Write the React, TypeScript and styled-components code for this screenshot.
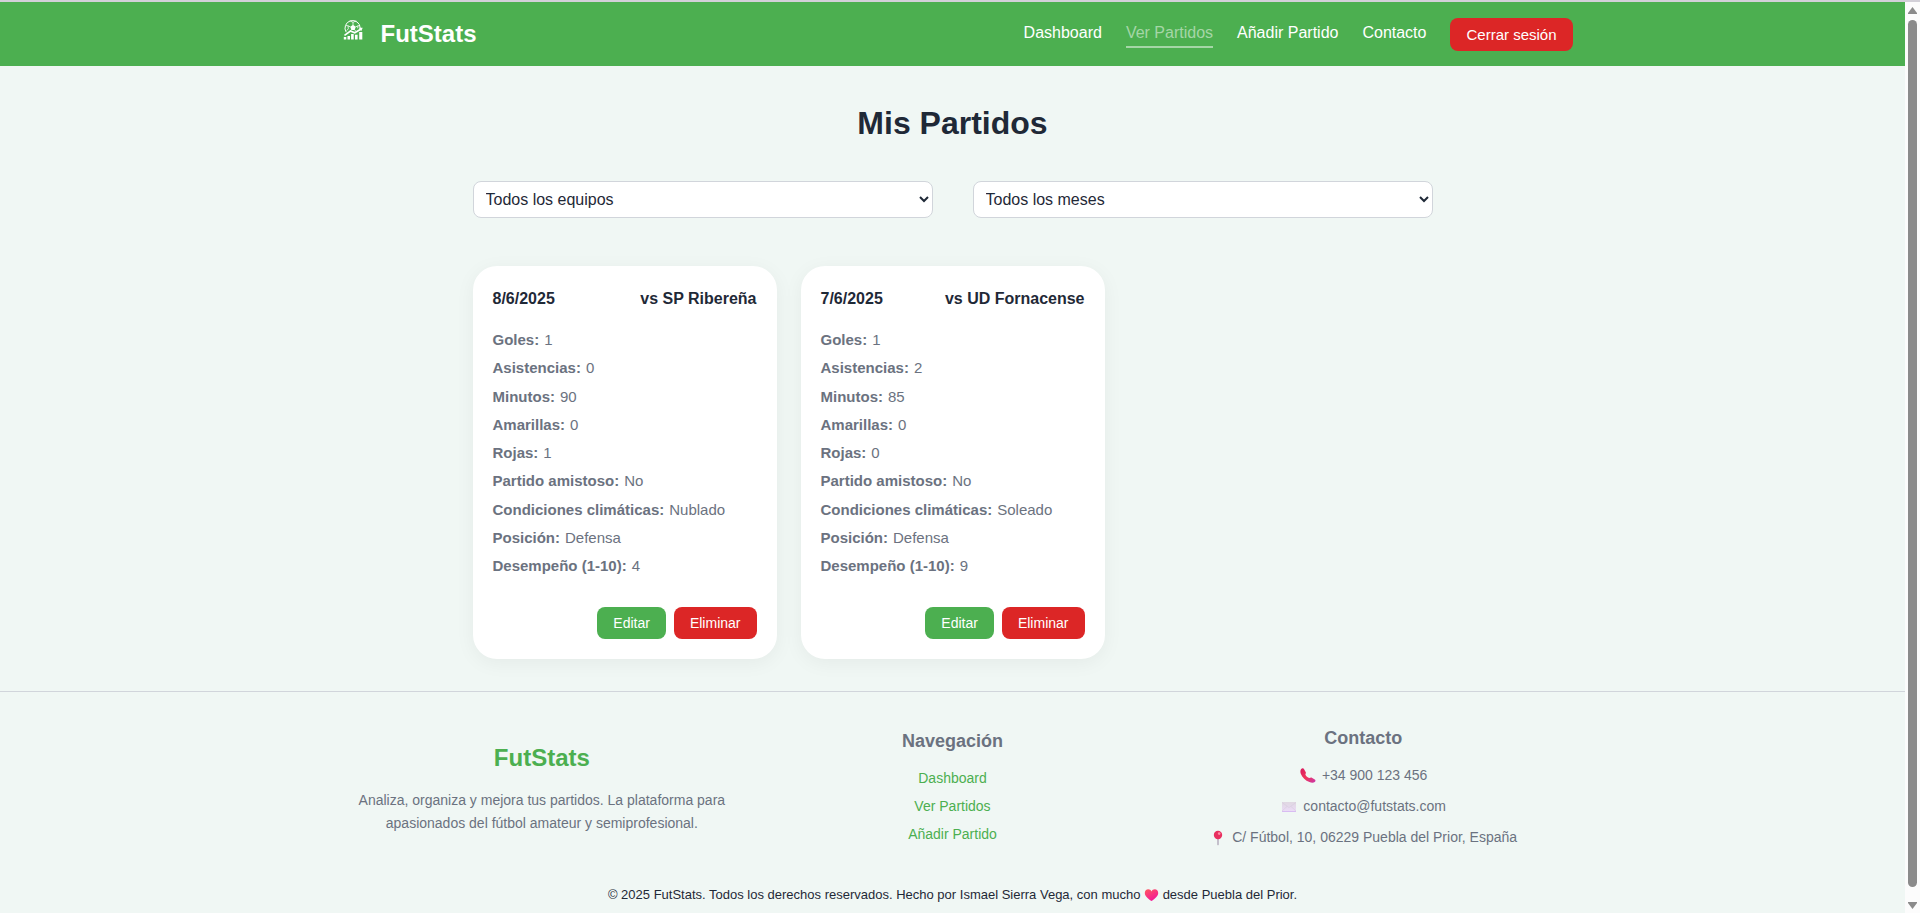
import React from "react";
import styled, { createGlobalStyle } from "styled-components";

const color = {
  green: "#4caf50",
  red: "#dc2626",
  page: "#f0f7f4",
  ink: "#1f2937",
  muted: "#6b7280",
  line: "#d1d5db",
};

const GlobalStyle = createGlobalStyle`
  *, *::before, *::after { box-sizing: border-box; }
  body {
    margin: 0;
    background: ${color.page};
    color: ${color.ink};
    font-family: Arial, "Liberation Sans", sans-serif;
    font-size: 16px;
  }
  h1, h2, h3, p, ul, dl, dd { margin: 0; padding: 0; }
  ul { list-style: none; }
  a { text-decoration: none; }
`;

const Shell = styled.div`
  display: grid;
  grid-template-columns: minmax(0, 1fr) 15px;
  min-height: 100vh;
  border-top: 2px solid #d3d0d8;
`;

const Page = styled.div`
  display: flex;
  flex-direction: column;
`;

const Header = styled.header`
  background: ${color.green};
`;

const HeaderInner = styled.div`
  display: flex;
  align-items: center;
  justify-content: space-between;
  max-width: 1280px;
  min-height: 64px;
  margin: 0 auto;
  padding: 0 20px;
`;

const Brand = styled.a`
  display: flex;
  align-items: center;
  gap: 8px;
  color: #fff;
  font-size: 24px;
  font-weight: 700;
`;

const BrandMark = styled.svg`
  width: 40px;
  height: 40px;
`;

const Nav = styled.nav`
  display: flex;
  align-items: center;
  gap: 24px;
`;

const NavLink = styled.a<{ $active?: boolean }>`
  border-bottom: 2px solid ${(p) => (p.$active ? "#a5d6a7" : "transparent")};
  color: ${(p) => (p.$active ? "#a5d6a7" : "#fff")};
  line-height: 26px;
`;

const Button = styled.button<{ $danger?: boolean; $large?: boolean }>`
  padding: 8px 16px;
  border: 0;
  border-radius: 8px;
  background: ${(p) => (p.$danger ? color.red : color.green)};
  color: #fff;
  font-family: inherit;
  font-size: ${(p) => (p.$large ? 15 : 14)}px;
  cursor: pointer;
`;

const Main = styled.main`
  width: 100%;
  max-width: 1000px;
  margin: 0 auto;
  padding: 32px 20px;
`;

const Title = styled.h1`
  margin-bottom: 32px;
  font-size: 32px;
  line-height: 51px;
  text-align: center;
`;

const Filters = styled.div`
  display: grid;
  grid-template-columns: 1fr 1fr;
  gap: 40px;
  margin-bottom: 48px;
`;

const Select = styled.select`
  width: 100%;
  height: 37px;
  padding: 8px;
  border: 1px solid ${color.line};
  border-radius: 8px;
  background: #fff;
  color: ${color.ink};
  font-family: inherit;
  font-size: 16px;
`;

const CardGrid = styled.section`
  display: grid;
  grid-template-columns: repeat(3, 1fr);
  gap: 24px;
`;

const Card = styled.article`
  display: flex;
  flex-direction: column;
  min-height: 393px;
  padding: 20px;
  border-radius: 24px;
  background: #fff;
  box-shadow: 0 4px 20px rgba(0, 0, 0, 0.05);
`;

const CardHeader = styled.div`
  display: flex;
  justify-content: space-between;
  margin-bottom: 16px;
  font-weight: 700;
  line-height: 26px;
`;

const Stats = styled.dl`
  display: flex;
  flex: 1;
  flex-direction: column;
  justify-content: space-between;
  color: ${color.muted};
  font-size: 15px;
  line-height: 24px;
`;

const Stat = styled.div`
  display: flex;
  gap: 5px;
  dt { font-weight: 700; }
`;

const CardActions = styled.div`
  display: flex;
  justify-content: flex-end;
  gap: 8px;
  margin-top: 29px;
`;

const Footer = styled.footer`
  flex: 1;
  border-top: 1px solid ${color.line};
  padding: 32px 20px 0;
`;

const FooterColumns = styled.div`
  display: grid;
  grid-template-columns: repeat(3, 1fr);
  align-items: center;
  gap: 32px;
  max-width: 1200px;
  margin: 0 auto;
  color: ${color.muted};
  font-size: 14px;
  text-align: center;
`;

const FooterBrand = styled.h2`
  margin-bottom: 12px;
  color: ${color.green};
  font-size: 24px;
  line-height: 38px;
`;

const FooterText = styled.p`
  line-height: 23px;
`;

const FooterHeading = styled.h3`
  margin-bottom: 12px;
  font-size: 18px;
  line-height: 28px;
`;

const FooterLinks = styled.ul`
  display: grid;
  gap: 5px;
  line-height: 23px;
  a { color: ${color.green}; }
`;

const ContactList = styled.ul`
  display: grid;
  gap: 8px;
  line-height: 23px;
`;

const ContactItem = styled.li`
  display: flex;
  align-items: center;
  justify-content: center;
  gap: 5px;
`;

const Pictogram = styled.svg`
  width: 18px;
  height: 18px;
  flex: none;
`;

const InlineHeart = styled.svg`
  width: 15px;
  height: 14px;
  vertical-align: -3px;
`;

const Copyright = styled.p`
  margin-top: 35px;
  font-size: 13px;
  line-height: 22px;
  text-align: center;
`;

const ScrollRail = styled.div`
  position: sticky;
  top: 0;
  display: flex;
  flex-direction: column;
  align-items: center;
  gap: 6px;
  height: calc(100vh - 2px);
  padding: 5px 0 4px;
  background: #fcfcfc;
`;

const ScrollThumb = styled.div`
  flex: 1;
  width: 9px;
  margin-bottom: 9px;
  border-radius: 5px;
  background: #8b8b8b;
`;

const ScrollArrow = styled.svg`
  width: 9px;
  height: 7px;
`;

type Match = { date: string; rival: string; stats: [string, string][] };

const matches: Match[] = [
  {
    date: "8/6/2025",
    rival: "vs SP Ribereña",
    stats: [
      ["Goles:", "1"],
      ["Asistencias:", "0"],
      ["Minutos:", "90"],
      ["Amarillas:", "0"],
      ["Rojas:", "1"],
      ["Partido amistoso:", "No"],
      ["Condiciones climáticas:", "Nublado"],
      ["Posición:", "Defensa"],
      ["Desempeño (1-10):", "4"],
    ],
  },
  {
    date: "7/6/2025",
    rival: "vs UD Fornacense",
    stats: [
      ["Goles:", "1"],
      ["Asistencias:", "2"],
      ["Minutos:", "85"],
      ["Amarillas:", "0"],
      ["Rojas:", "0"],
      ["Partido amistoso:", "No"],
      ["Condiciones climáticas:", "Soleado"],
      ["Posición:", "Defensa"],
      ["Desempeño (1-10):", "9"],
    ],
  },
];

// A football behind a rising bar chart with a trend line.
const Logo = () => (
  <BrandMark viewBox="0 0 40 40" fill="none" stroke="#fff" aria-hidden="true">
    <path d="M13.2 18.2A7.600 7.600 0 1 1 27.200 14" strokeWidth="1" />
    <path d="M20 10.800l2.700 2-1 3.200h-3.400l-1-3.200z" fill="#fff" stroke="none" />
    <path d="M20 11V8.300M22.500 13l2.400-1.200M17.500 13l-2.400-1.200M18.400 15.800l-1.500 1.500M21.600 15.800l1.200 1.400" strokeWidth="0.8" />
    <path d="M16.800 6.800L20 8.300l3.200-1.500M13 11.500l2.100.3.200 3-1.600 1.800M27 11.500l-2.100.3-.2 2.500" strokeWidth="0.8" />
    <path d="M11.500 21.300l6-4.300 4.200 1.800 6-3.600" strokeWidth="1.600" />
    <path d="M25.800 13.800h3.900l-1.500 3.500z" fill="#fff" stroke="none" />
    <path d="M10.800 23H13.300V25.500H10.800zM14.500 22H17V25.500H14.500zM18.100 20H20.700V25.500H18.100zM22 20.800H24.600V25.500H22zM26.200 18H29.300V25.500H26.200z" fill="#fff" stroke="none" />
  </BrandMark>
);

const PhoneIcon = () => (
  <Pictogram viewBox="0 0 18 18" aria-hidden="true">
    <defs>
      <linearGradient id="phone" x1="0" y1="0" x2="1" y2="1">
        <stop offset="0" stopColor="#d81b60" />
        <stop offset="0.5" stopColor="#f0365a" />
        <stop offset="1" stopColor="#c837ab" />
      </linearGradient>
    </defs>
    <path d="M2 2.200C2.900 1.200 4.500 1 5.100 2.200L6.800 5.200c.5 1-.5 1.600-.4 2.300.5 1.500 2.300 3.200 3.900 3.600.8 0 1.500-1 2.500-.4l3 1.800c1 .7.800 1.800-.1 2.600-1.200 1-3.300.9-5.300 0C6.400 13.600 3.300 10.500 1.900 7c-.7-1.900-.7-3.800.1-4.800z" fill="url(#phone)" />
  </Pictogram>
);

const MailIcon = () => (
  <Pictogram viewBox="0 0 18 18" aria-hidden="true">
    <defs>
      <linearGradient id="mail" x1="0" y1="0" x2="0" y2="1">
        <stop offset="0" stopColor="#e0d8e2" />
        <stop offset="1" stopColor="#ecdcf8" />
      </linearGradient>
    </defs>
    <path d="M2 4h14v10H2z" fill="url(#mail)" />
    <path d="M2 4.500l7 5 7-5M2 13l5-4.500M16 13l-5-4.500" fill="none" stroke="#d3c8da" strokeWidth="0.500" />
    <path d="M2 13.200h14v.8H2z" fill="#d4b4f0" />
  </Pictogram>
);

const PinIcon = () => (
  <Pictogram viewBox="0 0 18 18" aria-hidden="true">
    <path d="M8.400 9h1.200v6.700l-.6.800-.6-.8z" fill="#a79bb0" />
    <circle cx="9" cy="6" r="4.200" fill="#e8305f" />
    <circle cx="10.200" cy="4.600" r="1.300" fill="#ff8fa8" />
  </Pictogram>
);

const Heart = () => (
  <InlineHeart viewBox="0 0 15 14" role="img" aria-label="amor">
    <defs>
      <linearGradient id="heart" x1="0" y1="0" x2="0.600" y2="1">
        <stop offset="0" stopColor="#ff5a5f" />
        <stop offset="1" stopColor="#f3169a" />
      </linearGradient>
    </defs>
    <path d="M7.500 13C4 10.800.8 8.200.8 5c0-2.200 1.500-3.700 3.400-3.700 1.500 0 2.700.8 3.300 2.100.6-1.300 1.800-2.100 3.300-2.100 1.900 0 3.400 1.500 3.400 3.700 0 3.200-3.200 5.800-6.700 8z" fill="url(#heart)" />
  </InlineHeart>
);

const MatchCard = ({ match }: { match: Match }) => (
  <Card>
    <CardHeader>
      <span>{match.date}</span>
      <span>{match.rival}</span>
    </CardHeader>
    <Stats>
      {match.stats.map(([label, value]) => (
        <Stat key={label}>
          <dt>{label}</dt>
          <dd>{value}</dd>
        </Stat>
      ))}
    </Stats>
    <CardActions>
      <Button type="button">Editar</Button>
      <Button type="button" $danger>Eliminar</Button>
    </CardActions>
  </Card>
);

export default function App() {
  return (
    <>
      <GlobalStyle />
      <Shell>
        <Page>
          <Header>
            <HeaderInner>
              <Brand href="#inicio">
                <Logo />
                FutStats
              </Brand>
              <Nav>
                <NavLink href="#dashboard">Dashboard</NavLink>
                <NavLink href="#partidos" $active aria-current="page">Ver Partidos</NavLink>
                <NavLink href="#nuevo">Añadir Partido</NavLink>
                <NavLink href="#contacto">Contacto</NavLink>
                <Button type="button" $danger $large>Cerrar sesión</Button>
              </Nav>
            </HeaderInner>
          </Header>

          <Main>
            <Title>Mis Partidos</Title>
            <Filters>
              <Select aria-label="Equipo">
                <option>Todos los equipos</option>
              </Select>
              <Select aria-label="Mes">
                <option>Todos los meses</option>
              </Select>
            </Filters>
            <CardGrid>
              {matches.map((m) => (
                <MatchCard key={m.date} match={m} />
              ))}
            </CardGrid>
          </Main>

          <Footer>
            <FooterColumns>
              <div>
                <FooterBrand>FutStats</FooterBrand>
                <FooterText>
                  Analiza, organiza y mejora tus partidos. La plataforma para
                  apasionados del fútbol amateur y semiprofesional.
                </FooterText>
              </div>
              <div>
                <FooterHeading>Navegación</FooterHeading>
                <FooterLinks>
                  <li><a href="#dashboard">Dashboard</a></li>
                  <li><a href="#partidos">Ver Partidos</a></li>
                  <li><a href="#nuevo">Añadir Partido</a></li>
                </FooterLinks>
              </div>
              <div>
                <FooterHeading>Contacto</FooterHeading>
                <ContactList>
                  <ContactItem><PhoneIcon />+34 900 123 456</ContactItem>
                  <ContactItem><MailIcon />contacto@futstats.com</ContactItem>
                  <ContactItem><PinIcon />C/ Fútbol, 10, 06229 Puebla del Prior, España</ContactItem>
                </ContactList>
              </div>
            </FooterColumns>
            <Copyright>
              © 2025 FutStats. Todos los derechos reservados. Hecho por Ismael
              Sierra Vega, con mucho <Heart /> desde Puebla del Prior.
            </Copyright>
          </Footer>
        </Page>
        <ScrollRail aria-hidden="true">
          <ScrollArrow viewBox="0 0 9 7"><path d="M4.500 0L9 6v1H0V6z" fill="#8b8b8b" /></ScrollArrow>
          <ScrollThumb />
          <ScrollArrow viewBox="0 0 9 7"><path d="M4.500 7L9 1V0H0v1z" fill="#8b8b8b" /></ScrollArrow>
        </ScrollRail>
      </Shell>
    </>
  );
}
